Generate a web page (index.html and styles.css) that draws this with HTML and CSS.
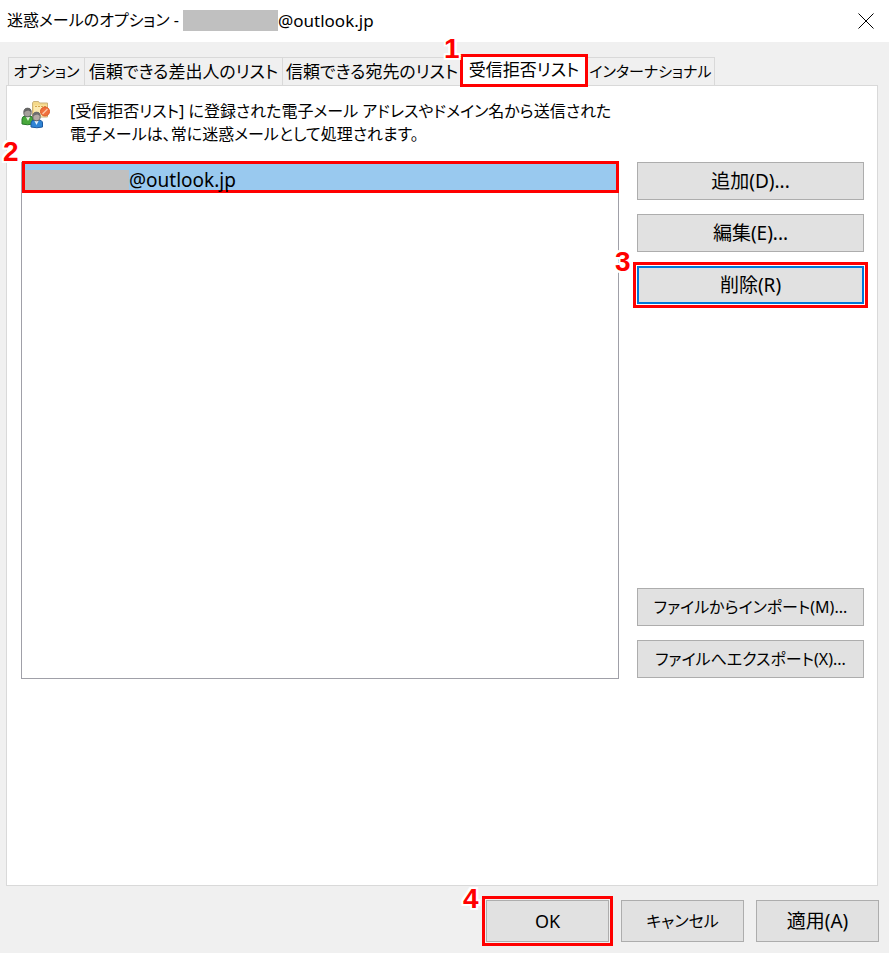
FILE: index.html
```html
<!DOCTYPE html>
<html lang="ja">
<head>
<meta charset="utf-8">
<meta name="viewport" content="width=device-width, initial-scale=1">
<title>迷惑メールのオプション</title>
<link rel="stylesheet" href="styles.css">
</head>
<body>
<div class="dialog">
  <header class="titlebar">
    <h1 class="title">迷惑メールのオプション - <span class="mask"></span><span class="address">@outlook.jp</span></h1>
    <button class="close" type="button" aria-label="閉じる">
      <svg width="16" height="16" viewBox="0 0 16 16"><path d="M.5.5l15 15M15.5.5l-15 15" stroke="#000" fill="none"/></svg>
    </button>
  </header>
  <div class="tabs" role="tablist">
    <button class="tab tab-kana" type="button" role="tab">オプション</button>
    <button class="tab" type="button" role="tab">信頼できる差出人のリスト</button>
    <button class="tab" type="button" role="tab">信頼できる宛先のリスト</button>
    <button class="tab tab-active" type="button" role="tab" aria-selected="true">受信拒否リスト<span class="step step-tab">1</span></button>
    <button class="tab tab-kana" type="button" role="tab">インターナショナル</button>
  </div>
  <main class="panel">
    <div class="intro">
      <svg class="intro-icon" width="30" height="30" viewBox="0 0 30 30">
        <path d="M11.500 3l1-1.500h5l1 1.500h8v14h-15z" fill="#f5d98a" stroke="#c9b27c"/>
        <path d="M13 5.500h13v11H13z" fill="#fbe9b0"/>
        <path d="M14 6.500h11" stroke="#d4a64e" stroke-dasharray="2 1"/>
        <circle cx="24" cy="11.500" r="4.500" fill="#f0703c" stroke="#dd5a28"/>
        <path d="M21.500 14l5-5" stroke="#fbc5a5" stroke-width="1.500"/>
        <path d="M1 24v-5q0-3 4-3h3q4 0 4 3v5q-5.500 1.500-11 0z" fill="#48a83b" stroke="#27772a"/>
        <path d="M5 17l2 4 2-4z" fill="#e8f6df"/>
        <ellipse cx="6.500" cy="12.500" rx="3.700" ry="4.300" fill="#a6a09c" stroke="#666"/>
        <path d="M2.800 13q0-5 4-5 3.500 0 3.500 4l-3-1.500q-3 0-4.500 2.500z" fill="#656565"/>
        <path d="M10 27v-4q0-3 4-3h3q4.500 0 4.500 3v4q-5.500 1.500-11.500 0z" fill="#2f84d4" stroke="#1c58a0"/>
        <path d="M13.500 21l2 4 2-4z" fill="#e5f1fd"/>
        <ellipse cx="15.500" cy="16.500" rx="3.700" ry="4.300" fill="#b5aaa5" stroke="#666"/>
        <path d="M11.800 17q0-5 4-5 3.500 0 3.500 4l-3-1.500q-3 0-4.500 2.500z" fill="#6e6e6e"/>
      </svg>
      <p class="intro-text">[受信拒否リスト] に登録された電子メール アドレスやドメイン名から送信された<br>電子メールは、常に迷惑メールとして処理されます。</p>
    </div>
    <div class="content">
      <div class="list-wrap">
        <ul class="list" role="listbox" aria-label="受信拒否リスト">
          <li class="list-row" role="option" aria-selected="true"><span class="mask mask-row"></span>@outlook.jp</li>
        </ul>
        <span class="step step-list">2</span>
      </div>
      <div class="actions">
        <button class="btn btn-kanji" type="button">追加(D)...</button>
        <button class="btn btn-kanji" type="button">編集(E)...</button>
        <button class="btn btn-kanji btn-default marked" type="button">削除(R)<span class="step step-remove">3</span></button>
        <button class="btn btn-kana btn-import" type="button">ファイルからインポート(M)...</button>
        <button class="btn btn-kana" type="button">ファイルへエクスポート(X)...</button>
      </div>
    </div>
  </main>
  <footer class="footer">
    <button class="btn marked" type="button">OK<span class="step step-ok">4</span></button>
    <button class="btn btn-kana" type="button">キャンセル</button>
    <button class="btn btn-kanji" type="button">適用(A)</button>
  </footer>
</div>
</body>
</html>
```
FILE: styles.css
```css
* { box-sizing: border-box; }

body {
  margin: 0;
  background: #f0f0f0;
  color: #000;
  font: 16px/23px "Noto Sans", "Noto Sans CJK JP", sans-serif;
  font-feature-settings: "palt";
}

button {
  font: inherit;
  font-feature-settings: inherit;
  color: inherit;
}

.dialog {
  display: flex;
  flex-direction: column;
  min-height: 100vh;
}

.titlebar {
  display: flex;
  align-items: center;
  justify-content: space-between;
  height: 41px;
  padding: 0 8px 0 7px;
  background: #fff;
  box-shadow: 0 1px #fff;
}

.title {
  display: flex;
  align-items: center;
  margin: 0;
  font-size: 16px;
  font-weight: 400;
  white-space: pre;
}

.address { font-size: 17px; }

.mask {
  width: 95px;
  height: 21px;
  background: #c0c0c0;
}

.close {
  display: flex;
  padding: 0;
  margin-right: 7px;
  border: 0;
  background: none;
}

.tabs {
  display: grid;
  grid-template-columns: 76px 198px 179px 125px 129px;
  align-items: end;
  height: 44px;
  padding-left: 8px;
}

.tab {
  position: relative;
  height: 28px;
  padding: 0;
  border: 1px solid #d9d9d9;
  border-width: 1px 0 0 1px;
  background: #f0f0f0;
  font-size: 17px;
  white-space: nowrap;
}

.tab-kana { font-size: 15px; }

.tab:last-child { border-right-width: 1px; }

.tab-active {
  z-index: 1;
  height: 33px;
  margin: 0 -2px -2px -1px;
  padding-bottom: 3px;
  border: 3px solid #f00;
  background: #fff;
}

.panel {
  flex: 1;
  display: flex;
  flex-direction: column;
  margin: 0 11px 0 6px;
  padding: 14px 13px 206px 14px;
  border: 1px solid #d9d9d9;
  background: #fff;
}

.intro {
  display: flex;
  gap: 19px;
  height: 62px;
}

.intro-icon { flex: none; }

.intro-text { margin: 0; }

.content {
  flex: 1;
  display: flex;
  gap: 18px;
}

.list-wrap {
  position: relative;
  flex: 1;
}

.list {
  height: 100%;
  margin: 0;
  padding: 0;
  border: 1px solid #a0a0a8;
  list-style: none;
}

.list-row {
  display: flex;
  align-items: flex-end;
  height: 32px;
  margin: -2px -1px 0 0;
  border: 3px solid #f00;
  background: #99c9ef;
  font-size: 19px;
  line-height: 20px;
}

.mask-row {
  width: 104px;
  height: 20px;
}

.actions {
  display: flex;
  flex-direction: column;
  gap: 14px;
  width: 227px;
  padding-bottom: 1px;
}

.btn {
  position: relative;
  height: 38px;
  padding: 0;
  border: 1px solid #adadad;
  background: #e1e1e1;
  font-size: 18px;
}

.btn-kana { font-size: 16px; }

.btn-kanji { font-size: 19px; }

.btn-default { border: 2px solid #0078d7; }

.btn-import { margin-top: auto; }

.marked {
  outline: 3px solid #f00;
  outline-offset: 1px;
}

.footer {
  display: flex;
  justify-content: flex-end;
  gap: 12px;
  padding: 14px 10px 11px;
}

.footer .btn {
  width: 123px;
  height: 42px;
}

.step {
  position: absolute;
  color: #f00;
  font: bold 28px/28px "Liberation Sans", sans-serif;
  text-shadow: 2px 0 #fff, -2px 0 #fff, 0 2px #fff, 0 -2px #fff, 2px 2px #fff, -2px -2px #fff, 2px -2px #fff, -2px 2px #fff;
}

.step-tab { left: -19px; top: -22px; }
.step-list { left: -18px; top: -24px; }
.step-remove { left: -24px; top: -20px; }
.step-ok { left: -24px; top: -16px; }
```
